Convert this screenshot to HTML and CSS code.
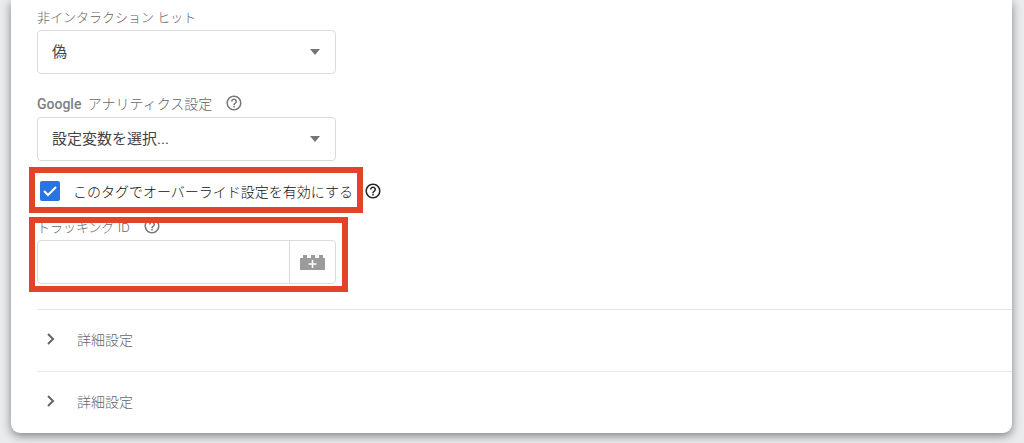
FILE: index.html
```html
<!DOCTYPE html>
<html lang="ja">
<head>
    <meta charset="UTF-8">
    <meta name="viewport" content="width=device-width, initial-scale=1.0">
    <title>タグの設定</title>
    <link rel="stylesheet" href="styles.css">
</head>
<body>
    <main class="card">
        <form class="settings">
            <div class="field">
                <div class="field-label">
                    <label for="non-interaction">非インタラクション ヒット</label>
                </div>
                <select id="non-interaction" class="select">
                    <option>偽</option>
                </select>
            </div>

            <div class="field">
                <div class="field-label field-label-large">
                    <label for="ga-settings"><b>Google</b> アナリティクス設定</label>
                    <svg class="help" viewBox="0 0 24 24" aria-hidden="true"><path d="M11 18h2v-2h-2v2zm1-16C6.48 2 2 6.48 2 12s4.48 10 10 10 10-4.48 10-10S17.52 2 12 2zm0 18c-4.41 0-8-3.59-8-8s3.59-8 8-8 8 3.59 8 8-3.59 8-8 8zm0-14c-2.21 0-4 1.79-4 4h2c0-1.1.9-2 2-2s2 .9 2 2c0 2-3 1.75-3 5h2c0-2.25 3-2.5 3-5 0-2.21-1.79-4-4-4z"/></svg>
                </div>
                <select id="ga-settings" class="select">
                    <option>設定変数を選択...</option>
                </select>
            </div>

            <div class="override">
                <div class="override-option">
                    <input type="checkbox" id="override" class="checkbox" checked>
                    <label for="override">このタグでオーバーライド設定を有効にする</label>
                    <span class="highlight"></span>
                </div>
                <svg class="help help-dark" viewBox="0 0 24 24" aria-hidden="true"><path d="M11 18h2v-2h-2v2zm1-16C6.48 2 2 6.48 2 12s4.48 10 10 10 10-4.48 10-10S17.52 2 12 2zm0 18c-4.41 0-8-3.59-8-8s3.59-8 8-8 8 3.59 8 8-3.59 8-8 8zm0-14c-2.21 0-4 1.79-4 4h2c0-1.1.9-2 2-2s2 .9 2 2c0 2-3 1.75-3 5h2c0-2.25 3-2.5 3-5 0-2.21-1.79-4-4-4z"/></svg>
            </div>

            <div class="field tracking">
                <div class="field-label">
                    <label for="tracking-id">トラッキング ID</label>
                    <svg class="help" viewBox="0 0 24 24" aria-hidden="true"><path d="M11 18h2v-2h-2v2zm1-16C6.48 2 2 6.48 2 12s4.48 10 10 10 10-4.48 10-10S17.52 2 12 2zm0 18c-4.41 0-8-3.59-8-8s3.59-8 8-8 8 3.59 8 8-3.59 8-8 8zm0-14c-2.21 0-4 1.79-4 4h2c0-1.1.9-2 2-2s2 .9 2 2c0 2-3 1.75-3 5h2c0-2.25 3-2.5 3-5 0-2.21-1.79-4-4-4z"/></svg>
                </div>
                <div class="input-group">
                    <input type="text" id="tracking-id">
                    <button type="button" aria-label="変数を選択">
                        <svg class="brick" viewBox="0 0 25 15" aria-hidden="true">
                            <path fill="#9b9b9b" d="M0 3h3V0h4v3h4V0h4v3h4V0h4v3h2v12H0z"/>
                            <path fill="none" stroke="#fff" stroke-width="1.5" d="M12.5 5v8M8.500 9h8"/>
                        </svg>
                    </button>
                </div>
                <span class="highlight"></span>
            </div>
        </form>

        <div class="sections">
            <button type="button" class="section">
                <svg class="chevron" viewBox="0 0 8 12" aria-hidden="true"><path d="M1 1l5 5-5 5"/></svg>
                詳細設定
            </button>
            <button type="button" class="section">
                <svg class="chevron" viewBox="0 0 8 12" aria-hidden="true"><path d="M1 1l5 5-5 5"/></svg>
                詳細設定
            </button>
        </div>
    </main>
</body>
</html>
```
FILE: styles.css
```css
* {
    box-sizing: border-box;
}

body {
    margin: 0;
    padding: 0 12px 10px 11px;
    background-color: #e9ebed;
    color: #111;
    font-family: Roboto, "Noto Sans CJK JP", sans-serif;
    font-size: 14px;
    font-weight: 300;
}

.card {
    padding: 6px 0 0 26px;
    background-color: #fff;
    border-radius: 0 0 9px 9px;
    box-shadow: 0 3px 10px rgba(0, 0, 0, 0.45);
}

.settings {
    display: flex;
    flex-direction: column;
    align-items: flex-start;
}

.field {
    width: 100%;
    max-width: 299px;
    margin-bottom: 19px;
}

.field-label {
    display: flex;
    align-items: center;
    gap: 13px;
    height: 20px;
    margin-bottom: 4px;
    color: #666;
    font-size: 13px;
}

.field-label-large {
    font-size: 14px;
}

.field-label b {
    margin-right: 3px;
    color: #808080;
    font-weight: 500;
}

.help {
    width: 18px;
    height: 18px;
    fill: #777;
}

.help-dark {
    fill: #222;
}

.select {
    display: block;
    width: 100%;
    height: 44px;
    padding: 0 40px 0 14px;
    appearance: none;
    border: 1px solid #dadcdc;
    border-radius: 4px;
    background: #fff url("data:image/svg+xml,%3Csvg xmlns='http://www.w3.org/2000/svg' width='10' height='6'%3E%3Cpath fill='%23757575' d='M0 0h10L5 6z'/%3E%3C/svg%3E") no-repeat right 15px center;
    color: #444;
    font-family: inherit;
    font-size: 15px;
}

.override {
    display: flex;
    align-items: center;
    gap: 11px;
    height: 22px;
}

.override-option {
    position: relative;
    display: flex;
    align-items: center;
    gap: 13px;
    padding-left: 3px;
}

.checkbox {
    width: 20px;
    height: 20px;
    margin: 0;
    appearance: none;
    border-radius: 2px;
    background: #2874e0 url("data:image/svg+xml,%3Csvg xmlns='http://www.w3.org/2000/svg' width='14' height='11'%3E%3Cpath fill='none' stroke='white' stroke-width='2' d='M1 5l4 4 8-8'/%3E%3C/svg%3E") no-repeat center;
}

/* Red frames drawn over the controls */
.highlight {
    position: absolute;
    inset: -14px -10px -12px -8px;
    border: 6px solid #e24329;
    pointer-events: none;
}

.tracking {
    position: relative;
    margin-top: 14px;
    margin-bottom: 25px;
}

.tracking .highlight {
    inset: 1px -12px -8px -8px;
}

.input-group {
    display: flex;
    height: 44px;
    border: 1px solid #dadcdc;
    border-radius: 4px;
}

.input-group input {
    flex: 1;
    min-width: 0;
    padding: 0 14px;
    border: none;
    background: none;
    font-size: 15px;
}

.input-group button {
    display: flex;
    align-items: center;
    justify-content: center;
    width: 46px;
    padding: 0;
    border: none;
    border-left: 1px solid #dadcdc;
    background: none;
}

.brick {
    width: 25px;
    height: 15px;
}

.section {
    display: flex;
    align-items: center;
    gap: 22px;
    width: 100%;
    height: 62px;
    padding: 0 10px 4px;
    border: none;
    border-top: 1px solid #e6e8e8;
    background: none;
    color: #666;
    font-family: inherit;
    font-size: 14px;
    font-weight: 300;
}

.chevron {
    width: 8px;
    height: 12px;
    fill: none;
    stroke: #666;
    stroke-width: 2;
}
```
